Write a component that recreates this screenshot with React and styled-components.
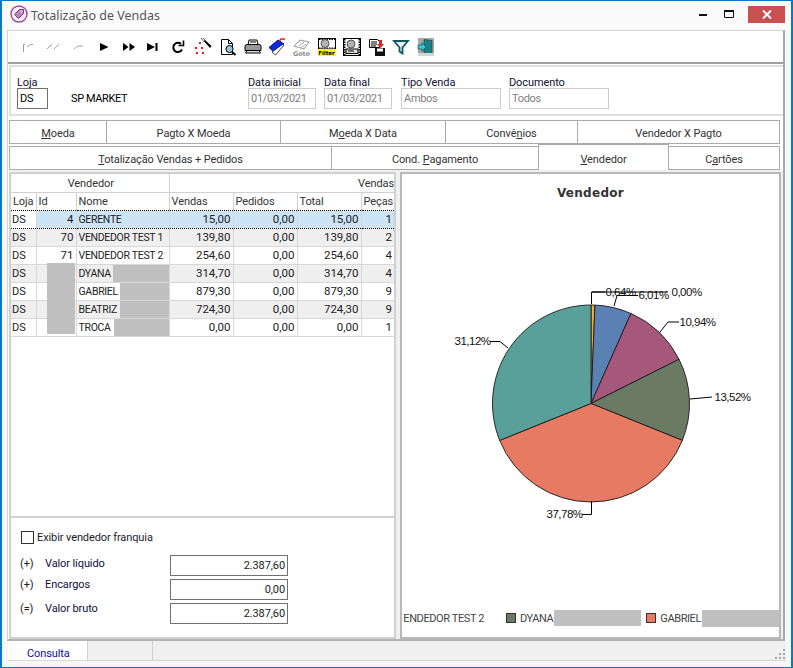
import styled, { createGlobalStyle } from "styled-components";

const GlobalStyle = createGlobalStyle`
  html, body { margin: 0; padding: 0; background: #fff; }
  * { box-sizing: border-box; }
`;

// -----------------------------------------------------
const tabsTop = [
  { w: 98, label: <><u>M</u>oeda</> },
  { w: 175, label: "Pagto X Moeda" },
  { w: 166, label: <>M<u>o</u>eda X Data</> },
  { w: 133, label: <>Convê<u>n</u>ios</> },
  { w: 203, label: "Vendedor X Pagto" },
];
const tabsBottom = [
  { w: 323, label: <><u>T</u>otalização Vendas + Pedidos</> },
  { w: 208, label: <>Cond. <u>P</u>agamento</> },
  { w: 131, label: <><u>V</u>endedor</>, active: true },
  { w: 112, label: <>C<u>a</u>rtões</> },
];
const rows = [
  { id: "4", nome: "GERENTE", v: "15,00", t: "15,00", p: "1", sel: true },
  { id: "70", nome: "VENDEDOR TEST 1", v: "139,80", t: "139,80", p: "2" },
  { id: "71", nome: "VENDEDOR TEST 2", v: "254,60", t: "254,60", p: "4" },
  { id: "", nome: "DYANA", hide: 56, v: "314,70", t: "314,70", p: "4" },
  { id: "", nome: "GABRIEL", hide: 49, v: "879,30", t: "879,30", p: "9" },
  { id: "", nome: "BEATRIZ", hide: 49, v: "724,30", t: "724,30", p: "9" },
  { id: "", nome: "TROCA", hide: 55, v: "0,00", t: "0,00", p: "1" },
];
const slices = [
  { pct: 0.64, color: "#f2ab35" },
  { pct: 6.01, color: "#5b80b3" },
  { pct: 10.94, color: "#a5577c" },
  { pct: 13.52, color: "#6b7b63" },
  { pct: 37.78, color: "#e67a63" },
  { pct: 31.12, color: "#5aa09a" },
];
const CX = 591;
const CY = 404.5;
const R = 98.5;

const pieSlices = () => {
  let acc = 0;
  return slices.map((s) => {
    const a0 = (acc / 100) * 2 * Math.PI;
    acc += s.pct;
    const a1 = (acc / 100) * 2 * Math.PI;
    const large = a1 - a0 > Math.PI ? 1 : 0;
    const x0 = CX + R * Math.sin(a0);
    const y0 = CY - R * Math.cos(a0);
    const x1 = CX + R * Math.sin(a1);
    const y1 = CY - R * Math.cos(a1);
    return { ...s, d: `M${CX} ${CY}L${x0} ${y0}A${R} ${R} 0 ${large} 1 ${x1} ${y1}Z` };
  });
};

const pieLabels = [
  { text: "0,64%", x: 605.5, y: 297, line: "591.5 305 591.5 293 605 293" },
  { text: "6,01%", x: 638.5, y: 300, line: "614 307 617 296.5 638 296.5" },
  { text: "0,00%", x: 671.5, y: 297, line: "592 293 668 293" },
  { text: "10,94%", x: 679.5, y: 327, line: "660 333 668 323 679 323" },
  { text: "13,52%", x: 714.5, y: 402, line: "690 400 712 398" },
  { text: "37,78%", x: 546.5, y: 519, line: "591.5 502 591.5 515.5 582 515.5" },
  { text: "31,12%", x: 454.5, y: 346, line: "508 349 500 342.5 490 342.5" },
];

// -----------------------------------------------------
const ToolIcon = ({ children }) => (
  <IconSvg viewBox="0 0 18 18" width="18" height="18">
    {children}
  </IconSvg>
);

const toolIcons = [
  <g fill="none" stroke="#9a9a9a"><path d="M3.5 14V6.5H5" /><path d="M7 9l4-2.5h2" stroke="#aaa" /></g>,
  <g fill="none" stroke="#a4a4a4"><path d="M2 11l4-4h1" /><path d="M9 11l4-4h1" /></g>,
  <g fill="none" stroke="#a4a4a4"><path d="M4 11l4-3h5" /></g>,
  <path d="M5 5l8.5 4-8.5 4z" fill="#000" />,
  <g fill="#000"><path d="M3 5l5.5 4-5.5 4z" /><path d="M9.5 5l5.5 4-5.5 4z" /></g>,
  <g fill="#000"><path d="M3 5l8 4-8 4z" /><rect x="11.5" y="5" width="2" height="8" /></g>,
  <g fill="none" stroke="#000" strokeWidth="2"><path d="M13 11.5A4.6 4.6 0 1 1 12 6" /><path d="M9.5 7.5h5v-5" strokeWidth="1.6" /></g>,
  <g><path d="M7 0l1.5-.5L17.5 8 16 10z" fill="#000" /><path d="M7 0l1.5-.5 2.5 2.5-1.5 1.5z" fill="#e8e8e8" stroke="#000" strokeWidth="0.4" /><g fill="#d22"><rect x="5" y="4" width="2" height="2" /><rect x="1" y="9" width="2" height="2" /><rect x="7" y="9" width="2" height="2" /><rect x="2" y="14" width="2" height="2" /><rect x="8" y="14" width="2" height="2" /></g></g>,
  <g><path d="M2.5 1.5h7l4 4v11h-11z" fill="#fff" stroke="#000" /><path d="M9.5 1.5v4h4" fill="none" stroke="#000" /><circle cx="10.5" cy="11" r="3.6" fill="#9cc4d6" stroke="#000" /><path d="M13 14l3.5 3" stroke="#000" strokeWidth="2" /></g>,
  <g><path d="M5 2h8l1 5H4z" fill="#fff" stroke="#000" /><path d="M1 8.5q0-2 2-2h12q2 0 2 2v4H1z" fill="#9a9a9a" stroke="#000" /><path d="M3 12.5h12l1.5 2.5h-15z" fill="#ddd" stroke="#000" /><path d="M6 4h6" stroke="#000" /></g>,
  <g><path d="M1 9.5L10 2l6 4-8.5 9.5z" fill="#0a2ce0" stroke="#00108a" /><path d="M4 14l3.5 3L16 7l-1-1z" fill="#fff" stroke="#000" strokeWidth="0.7" /><path d="M11 3.5l2-2.5h4" fill="none" stroke="#d22" strokeWidth="1.4" /></g>,
  <g><path d="M1 8l6-6 9 2-5 7z" fill="#fff" stroke="#999" /><path d="M3 6l5-4M6 8l5-4M8 10l5-4" stroke="#aaa" fill="none" /><text x="0" y="17.5" fontSize="6.5" fontWeight="700" fill="#8f8f8f" fontFamily="DejaVu Sans, sans-serif">Goto</text></g>,
  <g><rect x="0.5" y="0.5" width="17" height="10.5" fill="#fff" stroke="#000" /><path d="M1 1.5h16M1 10h16" stroke="#000" strokeDasharray="1.5 1" /><circle cx="7" cy="5.5" r="4" fill="#b4b4b4" stroke="#555" /><rect x="0" y="11" width="18" height="7" fill="#ff0" /><text x="0.3" y="16.8" fontSize="5.6" fontWeight="700" fill="#000" fontFamily="DejaVu Sans, sans-serif">Filter</text></g>,
  <g><rect x="0.5" y="0.5" width="17" height="17" fill="#fff" stroke="#000" /><path d="M1.5 1v16M16.5 1v16" stroke="#000" strokeWidth="2" strokeDasharray="1.5 1" /><circle cx="8" cy="6" r="4" fill="#b0b0b0" stroke="#555" /><rect x="3" y="11" width="12" height="4.5" fill="#ddd" stroke="#000" /><path d="M5 13h6" stroke="#000" /></g>,
  <g><path d="M1.5 1.5h8l2 2v6h-10z" fill="#fff" stroke="#000" /><path d="M3 4h6M3 6h6M3 8h5" stroke="#000" /><path d="M11 2h3v4h2l-3.5 4L9 6h2z" fill="#e02020" /><rect x="7" y="10" width="10" height="8" fill="#111" /><rect x="9" y="10.5" width="6" height="3" fill="#fff" /></g>,
  <path d="M2 3h14l-5.5 6.5v6l-3-2V9.5z" fill="#e8f4f4" stroke="#0c5a60" strokeWidth="1.8" />,
  <g><rect x="1" y="0" width="16" height="18" fill="#a8a8a8" /><path d="M7 1.5l8 1v13l-8 2z" fill="#1c7f86" stroke="#0a4044" strokeWidth="0.6" /><path d="M1 7h4V4.5L9 9l-4 4.5V11H1z" fill="#33c8d6" stroke="#0a4044" strokeWidth="0.6" /><rect x="1" y="15" width="16" height="3" fill="#d6d6d6" /></g>,
];

// -----------------------------------------------------
const Field = ({ label, value, width, readOnly }) => (
  <FieldBox>
    <FieldLabel>{label}</FieldLabel>
    <FieldInput $width={width} $readOnly={readOnly}>{value}</FieldInput>
  </FieldBox>
);

const App = () => {
  return (
    <>
      <GlobalStyle />
      <Window>
        <TitleBar>
          <svg width="18" height="18" viewBox="0 0 18 18">
            <circle cx="9" cy="9" r="8" fill="#f6eef6" stroke="#96509c" strokeWidth="1.4" />
            <path d="M4.5 9.5L9.5 4.5h4v4l-5 5z" fill="#b884bc" stroke="#7c3a84" />
            <circle cx="11.5" cy="6.5" r="0.9" fill="#fff" />
          </svg>
          <TitleText>Totalização de Vendas</TitleText>
          <WinButton>
            <svg width="8" height="3"><rect width="8" height="2" y="1" fill="#111" /></svg>
          </WinButton>
          <WinButton>
            <svg width="10" height="8"><path d="M.5 1.5h9v6h-9z" fill="none" stroke="#111" /><rect width="10" height="2" fill="#111" /></svg>
          </WinButton>
          <CloseButton>
            <svg width="10" height="9"><path d="M1 .5l8 8M9 .5l-8 8" stroke="#fff" strokeWidth="2" /></svg>
          </CloseButton>
        </TitleBar>

        <Body>
          <Toolbar>
            {toolIcons.map((icon, index) => (
              <ToolButton key={index}>
                <ToolIcon>{icon}</ToolIcon>
              </ToolButton>
            ))}
          </Toolbar>

          <FilterBox>
            <FieldBox>
              <FieldLabel>Loja</FieldLabel>
              <FieldInput $width={31} $dark>DS</FieldInput>
            </FieldBox>
            <StoreName>SP MARKET</StoreName>
            <Field label="Data inicial" value="01/03/2021" width={68} readOnly />
            <Field label="Data final" value="01/03/2021" width={68} readOnly />
            <Field label="Tipo Venda" value="Ambos" width={100} readOnly />
            <Field label="Documento" value="Todos" width={100} readOnly />
          </FilterBox>

          <TabRow>
            {tabsTop.map((tab, index) => (
              <Tab key={index} $width={tab.w}><span>{tab.label}</span></Tab>
            ))}
          </TabRow>
          <TabRow $second>
            {tabsBottom.map((tab, index) => (
              <Tab key={index} $width={tab.w} $active={tab.active}><span>{tab.label}</span></Tab>
            ))}
          </TabRow>

          <TabPanel>
            <LeftColumn>
              <GridPanel>
                <GridTable>
                  <colgroup>
                    <col width="25" />
                    <col width="40" />
                    <col width="93" />
                    <col width="64" />
                    <col width="64" />
                    <col width="64" />
                    <col width="33" />
                  </colgroup>
                  <thead>
                    <tr>
                      <HeadCell colSpan={3} $center>Vendedor</HeadCell>
                      <HeadCell colSpan={4} $end>Vendas</HeadCell>
                    </tr>
                    <tr>
                      <HeadCell>Loja</HeadCell>
                      <HeadCell>Id</HeadCell>
                      <HeadCell>Nome</HeadCell>
                      <HeadCell>Vendas</HeadCell>
                      <HeadCell>Pedidos</HeadCell>
                      <HeadCell>Total</HeadCell>
                      <HeadCell>Peças</HeadCell>
                    </tr>
                  </thead>
                  <tbody>
                    {rows.map((row, index) => (
                      <GridRow key={index} $sel={row.sel} $odd={index % 2 === 1}>
                        <FirstCell $sel={row.sel}>DS</FirstCell>
                        <NumCell>{row.id}</NumCell>
                        <NameCell>
                          <NameWrap>
                            {row.nome}
                            {row.hide && <NameMask $width={row.hide} />}
                          </NameWrap>
                        </NameCell>
                        <NumCell>{row.v}</NumCell>
                        <NumCell>0,00</NumCell>
                        <NumCell>{row.t}</NumCell>
                        <NumCell>{row.p}</NumCell>
                      </GridRow>
                    ))}
                  </tbody>
                </GridTable>
                <IdMask />
              </GridPanel>

              <TotalsPanel>
                <CheckRow>
                  <CheckBox />
                  Exibir vendedor franquia
                </CheckRow>
                <TotalsGrid>
                  <TotalSign>(+)</TotalSign>
                  <TotalLabel>Valor líquido</TotalLabel>
                  <TotalValue>2.387,60</TotalValue>
                  <TotalSign $lift>(+)</TotalSign>
                  <TotalLabel $lift>Encargos</TotalLabel>
                  <TotalValue>0,00</TotalValue>
                  <TotalSign $lift>(=)</TotalSign>
                  <TotalLabel $lift>Valor bruto</TotalLabel>
                  <TotalValue>2.387,60</TotalValue>
                </TotalsGrid>
              </TotalsPanel>
            </LeftColumn>

            <ChartPanel>
              <ChartTitle>Vendedor</ChartTitle>
              <ChartSvg viewBox="401 280 380 250" width="380" height="250">
                <g>
                  {pieSlices().map((s, index) => (
                    <path key={index} d={s.d} fill={s.color} stroke="#1a1a1a" strokeWidth="0.9" />
                  ))}
                </g>
                {pieLabels.map((l, index) => (
                  <g key={index}>
                    <polyline points={l.line} fill="none" stroke="#000" strokeWidth="1" />
                    <PieText x={l.x} y={l.y}>{l.text}</PieText>
                  </g>
                ))}
              </ChartSvg>
              <Legend>
                <LegendClip>ENDEDOR TEST 2</LegendClip>
                <LegendItem>
                  <LegendSwatch $color="#6b7b63" />
                  DYANA
                  <LegendMask $width={87} $height={16} />
                </LegendItem>
                <LegendItem>
                  <LegendSwatch $color="#e67a63" />
                  GABRIEL
                  <LegendMask $width={77} $height={17} />
                </LegendItem>
              </Legend>
            </ChartPanel>
          </TabPanel>
        </Body>

        <StatusBar>
          <StatusTab>Consulta</StatusTab>
          <StatusEmpty />
          <Grip width="12" height="12" viewBox="0 0 12 12">
            <g fill="#a8a8a8">
              <rect x="9" y="1" width="2" height="2" />
              <rect x="5" y="5" width="2" height="2" />
              <rect x="9" y="5" width="2" height="2" />
              <rect x="1" y="9" width="2" height="2" />
              <rect x="5" y="9" width="2" height="2" />
              <rect x="9" y="9" width="2" height="2" />
            </g>
          </Grip>
        </StatusBar>
      </Window>
    </>
  );
};
export default App;

// -----------------------------------------------------
const uiFont = `Roboto, "Liberation Sans", sans-serif`;
const uiSize = "11px";

const Window = styled.div`
  width: 793px;
  height: 668px;
  display: flex;
  flex-direction: column;
  overflow: hidden;
  border: 2px solid #0a78c8;
  border-top-width: 1px;
  border-bottom-width: 1px;
  background: #f7f7f7;
  font-family: ${uiFont};
  font-size: ${uiSize};
  letter-spacing: -0.1px;
  color: #1c1c2c;
`;

const TitleBar = styled.div`
  height: 29px;
  flex: none;
  display: flex;
  align-items: center;
  padding: 0 6px 3px 8px;
  background: #fafafa;
`;

const TitleText = styled.div`
  flex: 1;
  margin: 2px 0 0 3px;
  font-family: "Noto Sans", sans-serif;
  font-size: 12.5px;
  letter-spacing: 0;
  color: #555;
`;

const WinButton = styled.div`
  width: 26px;
  height: 17px;
  display: flex;
  align-items: center;
  justify-content: center;
`;

const CloseButton = styled.div`
  width: 37px;
  height: 17px;
  margin-left: 6px;
  display: flex;
  align-items: center;
  justify-content: center;
  background: #c75050;
`;

const Body = styled.div`
  height: 611px;
  margin: 0 6px 0 5px;
  flex: none;
  display: flex;
  flex-direction: column;
  background: #fff;
  border: 1px solid #d4d4d4;
  border-right: 2px solid #a8a8a8;
  border-bottom: 2px solid #b4b4b4;
`;

const Toolbar = styled.div`
  height: 33px;
  flex: none;
  display: flex;
  align-items: center;
  padding-left: 9px;
  border-bottom: 2px solid #a0a0a0;
`;

const ToolButton = styled.div`
  width: 24.8px;
  display: flex;
  justify-content: center;
`;

const IconSvg = styled.svg`
  display: block;
`;

const FilterBox = styled.div`
  height: 51px;
  flex: none;
  display: grid;
  grid-template-columns: 54px 177px 76px 77px 108px 100px;
  align-items: start;
  margin: 1px 0 0 1px;
  padding: 8px 0 0 6px;
  border: 2px solid #e0e0e0;
  border-right: none;
`;

const FieldBox = styled.div`
  display: flex;
  flex-direction: column;
`;

const FieldLabel = styled.label`
  height: 13px;
  line-height: 15px;
  color: #101030;
`;

const FieldInput = styled.div`
  width: ${(p) => p.$width}px;
  height: 21px;
  line-height: 19px;
  padding-left: 2px;
  letter-spacing: ${(p) => (p.$readOnly ? "-0.3px" : "-0.1px")};
  color: ${(p) => (p.$readOnly ? "#808080" : "#000")};
  border: ${(p) => (p.$dark ? "1px solid #707070" : "1px solid #cccccc")};
`;

const StoreName = styled.div`
  margin-top: 13px;
  line-height: 21px;
  letter-spacing: -0.4px;
  color: #000;
`;

const TabRow = styled.div`
  height: 26px;
  flex: none;
  display: flex;
  align-items: flex-end;
  margin-top: ${(p) => (p.$second ? "0" : "2px")};
  padding-left: 1px;
`;

const Tab = styled.div`
  width: ${(p) => p.$width}px;
  height: ${(p) => (p.$active ? "26px" : "24px")};
  display: flex;
  align-items: center;
  justify-content: center;
  padding-top: 3px;
  border: 1px solid #ababab;
  border-bottom: ${(p) => (p.$active ? "none" : "1px solid #ababab")};
  margin-right: -1px;
  background: #fff;
  color: #333;
  position: relative;
  z-index: ${(p) => (p.$active ? 1 : 0)};
  & u {
    text-underline-offset: 1px;
  }
`;

const TabPanel = styled.div`
  flex: 1;
  display: flex;
  min-height: 0;
  gap: 4px;
  margin: 0 0 0 1px;
  padding: 2px 2px 0 0;
  background: #f0f0f0;
`;

const LeftColumn = styled.div`
  width: 387px;
  display: flex;
  flex-direction: column;
  border: 2px solid #d0d0d0;
  background: #fff;
`;

const GridPanel = styled.div`
  height: 344px;
  flex: none;
  position: relative;
  border-bottom: 2px solid #d0d0d0;
`;

const GridTable = styled.table`
  width: 383px;
  table-layout: fixed;
  border-collapse: collapse;
  thead tr:last-child th {
    border-bottom: none;
  }
`;

const HeadCell = styled.th`
  height: 18px;
  padding: ${(p) => (p.colSpan ? "2px" : "0")} 0 0 2px;
  font-weight: 400;
  font-size: ${uiSize};
  color: #333;
  white-space: nowrap;
  overflow: hidden;
  text-align: ${(p) => (p.$center ? "center" : p.$end ? "right" : "left")};
  border: 1px solid #d0d0d0;
  border-top: none;
  &:first-child { border-left: none; }
  &:last-child { border-right: none; }
`;

const GridRow = styled.tr`
  height: 18px;
  background: ${(p) => (p.$sel ? "#cde4f6" : p.$odd ? "#efefef" : "#fff")};
  & > td {
    border-top: ${(p) => (p.$sel ? "1px dotted #000" : "none")};
    border-bottom: ${(p) => (p.$sel ? "1px dotted #000" : "1px solid #d8d8d8")};
  }
`;

const Cell = styled.td`
  padding: 0 2px;
  font-size: 11.5px;
  letter-spacing: 0;
  white-space: nowrap;
  overflow: hidden;
  color: #222;
  border-left: 1px solid #d8d8d8;
  border-right: 1px solid #d8d8d8;
`;

const FirstCell = styled(Cell)`
  padding-left: 1px;
  border-left: none;
  font-size: ${uiSize};
  background: ${(p) => (p.$sel ? "#fff" : "transparent")};
`;

const NumCell = styled(Cell)`
  text-align: right;
  padding-right: 2px;
  &:last-child { border-right: none; }
`;

const NameCell = styled(Cell)`
  padding-right: 0;
`;

const NameWrap = styled.div`
  display: flex;
  align-items: center;
  height: 17px;
  overflow: hidden;
  font-size: 10.5px;
  letter-spacing: -0.3px;
`;

const NameMask = styled.span`
  width: ${(p) => p.$width}px;
  height: 17px;
  flex: none;
  margin-left: auto;
  background: #c0c0c0;
`;

const IdMask = styled.div`
  position: absolute;
  left: 36px;
  top: 89px;
  width: 28px;
  height: 71px;
  background: #c0c0c0;
`;

const TotalsPanel = styled.div`
  flex: 1;
  padding: 12px 0 0 9px;
`;

const CheckRow = styled.div`
  display: flex;
  align-items: center;
  gap: 3px;
  height: 14px;
  padding-left: 1px;
  color: #1c1c2c;
`;

const CheckBox = styled.span`
  width: 13px;
  height: 13px;
  border: 1px solid #333;
  background: #fff;
`;

const TotalsGrid = styled.div`
  display: grid;
  grid-template-columns: 25px 125px 118px;
  grid-auto-rows: 21px;
  row-gap: 3px;
  margin-top: 11px;
`;

const TotalSign = styled.div`
  line-height: 18px;
  margin-top: ${(p) => (p.$lift ? "-3px" : "0")};
  color: #222;
`;

const TotalLabel = styled.div`
  line-height: 18px;
  margin-top: ${(p) => (p.$lift ? "-3px" : "0")};
  color: #101040;
`;

const TotalValue = styled.div`
  line-height: 19px;
  text-align: right;
  padding-right: 2px;
  color: #222;
  border: 1px solid #707070;
`;

const ChartPanel = styled.div`
  width: 382px;
  display: flex;
  flex-direction: column;
  border: 2px solid #b8b8b8;
  background: #fff;
  overflow: hidden;
`;

const ChartTitle = styled.div`
  margin-top: 10px;
  height: 18px;
  line-height: 18px;
  text-align: center;
  font-family: "DejaVu Sans", sans-serif;
  font-size: 12px;
  font-weight: 700;
  letter-spacing: 0.3px;
  color: #333;
`;

const ChartSvg = styled.svg`
  display: block;
  flex: none;
  margin-top: 77px;
  margin-left: -1px;
`;

const PieText = styled.text`
  font-family: "Liberation Sans", sans-serif;
  font-size: 11.5px;
  letter-spacing: -0.5px;
  fill: #111;
`;

const Legend = styled.div`
  margin-top: 80px;
  height: 18px;
  display: flex;
  align-items: center;
  justify-content: flex-end;
  overflow: hidden;
  white-space: nowrap;
  letter-spacing: -0.4px;
  color: #444;
`;

const LegendClip = styled.span`
  margin-right: 22px;
`;

const LegendItem = styled.span`
  display: flex;
  align-items: center;
  margin-right: 5px;
  &:last-child { margin-right: 0; }
`;

const LegendSwatch = styled.span`
  width: 10px;
  height: 10px;
  margin-right: 4px;
  background: ${(p) => p.$color};
  border: 1px solid #333;
`;

const LegendMask = styled.span`
  width: ${(p) => p.$width}px;
  height: ${(p) => p.$height}px;
  margin-left: 1px;
  background: #c0c0c0;
`;

const StatusBar = styled.div`
  height: 20px;
  flex: none;
  margin: 0 5px 0 6px;
  display: flex;
  align-items: stretch;
  background: #f0f0f0;
  border-bottom: 1px solid #d8d8d8;
  position: relative;
`;

const StatusTab = styled.div`
  width: 80px;
  padding-left: 19px;
  line-height: 25px;
  background: #fff;
  color: #1010a0;
  border-right: 1px solid #d0d0d0;
`;

const StatusEmpty = styled.div`
  width: 65px;
  border-right: 1px solid #d0d0d0;
`;

const Grip = styled.svg`
  position: absolute;
  right: 0;
  bottom: 0;
`;
